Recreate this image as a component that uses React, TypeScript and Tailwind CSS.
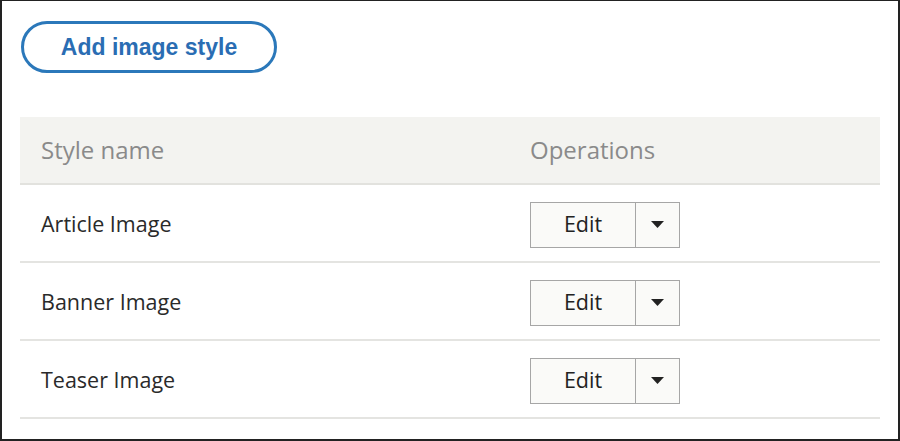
import React from "react";

const rows = ["Article Image", "Banner Image", "Teaser Image"];

function SplitButton() {
  return (
    <div className="mt-[3px] flex h-[46px] w-[150px] border border-[#a6a6a6] bg-[#fafaf8]">
      <div className="flex flex-1 items-center justify-center border-r border-[#a6a6a6] text-[21.5px] text-[#222]">
        Edit
      </div>
      <div className="flex w-[43px] items-center justify-center">
        <svg width="13" height="7" viewBox="0 0 13 7">
          <polygon points="0,0 13,0 6.5,7" fill="#222" />
        </svg>
      </div>
    </div>
  );
}

export default function App() {
  return (
    <div
      className="h-[441px] w-[900px] border-t border-l-2 border-r-2 border-b-2 border-[#222] bg-white"
      style={{ fontFamily: '"Open Sans", sans-serif' }}
    >
      <div className="pl-[19px] pt-[20px]">
        <div
          className="flex h-[52px] w-[256px] items-center justify-center rounded-full border-[3px] border-[#2b78ba] text-[23px] font-bold text-[#2a6db3]"
          style={{ fontFamily: '"Liberation Sans", Arial, sans-serif' }}
        >
          Add image style
        </div>
      </div>
      <div className="ml-[18px] mt-[44px] w-[860px]">
        <div className="flex h-[68px] items-center border-b-2 border-[#e2e2de] bg-[#f3f3f0] text-[24px] text-[#8a8a8a]">
          <div className="w-[510px] pl-[21px]">Style name</div>
          <div>Operations</div>
        </div>
        {rows.map((r) => (
          <div
            key={r}
            className="flex h-[78px] items-center border-b-2 border-[#e4e4e1] text-[21.5px] text-[#2a2a2a]"
          >
            <div className="w-[510px] pl-[21px] pt-[3px]">{r}</div>
            <SplitButton />
          </div>
        ))}
      </div>
    </div>
  );
}
